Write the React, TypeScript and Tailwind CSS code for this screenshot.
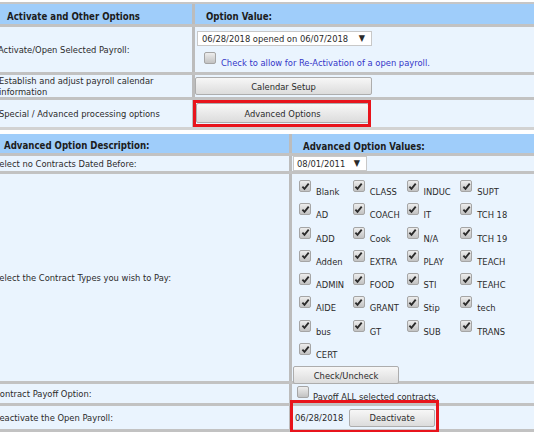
import React from "react";

const Check = ({ checked = true }: { checked?: boolean }) => (
  <span className="inline-flex w-[12px] h-[12px] shrink-0 items-center justify-center rounded-[2px] border border-[#a5a5a5] bg-linear-to-b from-[#ededed] to-[#c2c2c2]">
    {checked && (
      <svg width="9" height="9" viewBox="0 0 9 9">
        <path d="M1.4 4.6 L3.5 6.9 L7.7 1.6" fill="none" stroke="#2a2a2a" strokeWidth="1.8" />
      </svg>
    )}
  </span>
);

const types = [
  "Blank", "CLASS", "INDUC", "SUPT",
  "AD", "COACH", "IT", "TCH 18",
  "ADD", "Cook", "N/A", "TCH 19",
  "Adden", "EXTRA", "PLAY", "TEACH",
  "ADMIN", "FOOD", "STI", "TEAHC",
  "AIDE", "GRANT", "Stip", "tech",
  "bus", "GT", "SUB", "TRANS",
  "CERT",
];

export default function App() {
  return (
    <div className="relative w-[534px] h-[432px] overflow-hidden bg-white text-[9.3px] leading-[11px] text-[#2a2a2a] font-['DejaVu_Sans_Condensed','DejaVu_Sans',sans-serif]">
      <div className="-ml-[10px] w-[570px] pt-[2px]">
        {/* Top table */}
        <div className="border-t-2 border-[#c6c6c6] bg-[#eaf4fe]">
          <div className="flex h-[23px] bg-[#9fcdfa] border-b-[3px] border-[#c2c2c2] font-bold text-[#1c1c1c] text-[9.6px]">
            <div className="w-[205px] border-r-[3px] border-[#bcbcbc] pl-[17px] pt-[7px]">Activate and Other Options</div>
            <div className="flex-1 pl-[11px] pt-[7px]">Option Value:</div>
          </div>
          <div className="flex h-[48px] border-b-[3px] border-[#c2c2c2]">
            <div className="w-[205px] border-r-[3px] border-[#bcbcbc] pl-[8px] flex items-center whitespace-nowrap">Activate/Open Selected Payroll:</div>
            <div className="flex-1 pl-[2px] pt-[4px]">
              <div className="flex h-[15px] w-[175px] items-center justify-between border border-[#c8c8c8] bg-white pl-[4px] pr-[6px] whitespace-nowrap">
                <span>06/28/2018 opened on 06/07/2018</span>
                <span className="text-[9px]">▼</span>
              </div>
              <div className="mt-[6px] flex items-start pl-[7px]">
                <Check checked={false} />
                <span className="ml-[5px] mt-[5px] text-[#3434c8] whitespace-nowrap">Check to allow for Re-Activation of a open payroll.</span>
              </div>
            </div>
          </div>
          <div className="flex h-[25px] border-b-[3px] border-[#c2c2c2]">
            <div className="w-[205px] border-r-[3px] border-[#bcbcbc] pl-[9px] flex items-center">
              <span>Establish and adjust payroll calendar<br />information</span>
            </div>
            <div className="flex-1 pt-[2px]">
              <div className="flex h-[18px] w-[177px] items-center justify-center rounded-[2px] border border-[#adadad] bg-linear-to-b from-[#f7f7f7] to-[#dcdcdc]">Calendar Setup</div>
            </div>
          </div>
          <div className="flex h-[30px] border-b-[3px] border-[#d2d2d2]">
            <div className="w-[205px] border-r-[3px] border-[#bcbcbc] pl-[9px] flex items-center whitespace-nowrap">Special / Advanced processing options</div>
            <div className="flex-1 pl-[1px] pt-[3px]">
              <div className="flex h-[20px] w-[173px] items-center justify-center rounded-[2px] border border-[#adadad] bg-linear-to-b from-[#f7f7f7] to-[#dcdcdc]">Advanced Options</div>
            </div>
          </div>
        </div>

        <div className="h-[4px]" />

        {/* Bottom table */}
        <div className="bg-[#eaf4fe]">
          <div className="flex h-[22px] bg-[#9fcdfa] border-b-[3px] border-[#c2c2c2] font-bold text-[#1c1c1c] text-[9.6px]">
            <div className="w-[302px] border-r-[3px] border-[#bcbcbc] pl-[14px] pt-[6px]">Advanced Option Description:</div>
            <div className="flex-1 pl-[11px] pt-[7px]">Advanced Option Values:</div>
          </div>
          <div className="flex h-[18px] border-b-[3px] border-[#c2c2c2]">
            <div className="w-[302px] border-r-[3px] border-[#bcbcbc] pl-[4px] flex items-center whitespace-nowrap">Select no Contracts Dated Before:</div>
            <div className="flex-1 pl-[1px]">
              <div className="flex h-[15px] w-[74px] items-center justify-between border border-[#c8c8c8] bg-white pl-[3px] pr-[6px]">
                <span>08/01/2011</span>
                <span className="text-[9px]">▼</span>
              </div>
            </div>
          </div>
          <div className="flex h-[210px] border-b-[3px] border-[#c2c2c2]">
            <div className="w-[302px] border-r-[3px] border-[#bcbcbc] pl-[4px] flex items-center whitespace-nowrap">Select the Contract Types you wish to Pay:</div>
            <div className="flex-1 pt-[4px]">
              <div className="grid w-[222px] grid-cols-4 pl-[7px]">
                {types.map((t) => (
                  <div key={t} className="flex h-[23.3px] items-start">
                    <span className="mt-[2px]"><Check /></span>
                    <span className="ml-[5px] mt-[8px] whitespace-nowrap">{t}</span>
                  </div>
                ))}
              </div>
              <div className="ml-[1px] mt-[2px] flex h-[18px] w-[106px] items-center justify-center rounded-[2px] border border-[#adadad] bg-linear-to-b from-[#f7f7f7] to-[#dcdcdc]">Check/Uncheck</div>
            </div>
          </div>
          <div className="flex h-[22px] border-b-[3px] border-[#c2c2c2]">
            <div className="w-[302px] border-r-[3px] border-[#bcbcbc] pl-[4px] flex items-center whitespace-nowrap">Contract Payoff Option:</div>
            <div className="flex-1 pl-[5px] pt-[2px] flex items-start">
              <Check checked={false} />
              <span className="ml-[4px] mt-[5px] whitespace-nowrap">Payoff ALL selected contracts.</span>
            </div>
          </div>
          <div className="flex h-[26px] border-b-[3px] border-[#c2c2c2]">
            <div className="w-[302px] border-r-[3px] border-[#bcbcbc] pl-[3px] flex items-center whitespace-nowrap">Deactivate the Open Payroll:</div>
            <div className="flex-1 pl-[3px] flex items-center">
              <span>06/28/2018</span>
              <div className="ml-[6px] flex h-[18px] w-[86px] items-center justify-center rounded-[2px] border border-[#adadad] bg-linear-to-b from-[#f7f7f7] to-[#dcdcdc]">Deactivate</div>
            </div>
          </div>
        </div>
      </div>

      {/* Red highlight annotations */}
      <div className="absolute left-[193px] top-[100px] h-[27px] w-[178px] border-[3px] border-[#e8141c]" />
      <div className="absolute left-[290px] top-[400px] h-[33px] w-[149px] border-[3px] border-[#e8141c]" />
    </div>
  );
}
